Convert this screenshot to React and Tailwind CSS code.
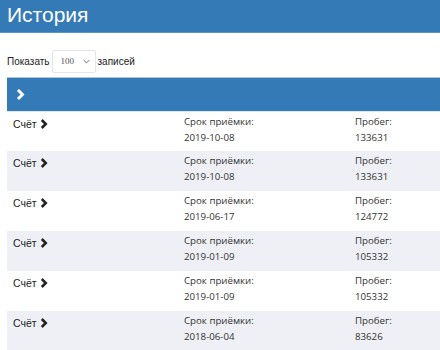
import React from "react";

const rows = [
  ["2019-10-08", "133631"],
  ["2019-10-08", "133631"],
  ["2019-06-17", "124772"],
  ["2019-01-09", "105332"],
  ["2019-01-09", "105332"],
  ["2018-06-04", "83626"],
];

function Chev({ className }) {
  return (
    <svg viewBox="0 0 10 12" className={className} fill="none" stroke="currentColor" strokeWidth="3.2" strokeLinejoin="miter" strokeLinecap="butt">
      <path d="M2.2 1 L7.2 6 L2.2 11" />
    </svg>
  );
}

export default function App() {
  return (
    <div className="w-[440px] h-[350px] overflow-hidden bg-white" style={{ fontFamily: '"Liberation Sans", Arial, sans-serif' }}>
      <div className="h-[33px] bg-[#337ab7] flex items-center pl-[7px] border-b border-[#5b95c8]">
        <h1 className="text-white text-[21px] leading-none -mt-[3px]">История</h1>
      </div>
      <div className="pl-[7px] pt-[17px] flex items-center gap-[2px] text-[10px] text-[#222]">
        <span>Показать</span>
        <div className="w-[44px] h-[23px] border border-[#e5e5e5] rounded-[2px] flex items-center justify-between pl-[8px] pr-[5px]">
          <span className="text-[9px] text-[#555]" style={{ fontFamily: '"Liberation Serif", serif' }}>100</span>
          <svg viewBox="0 0 10 6" className="w-[7px] h-[5px] text-[#666]" fill="none" stroke="currentColor" strokeWidth="1.4">
            <path d="M1 1 L5 5 L9 1" />
          </svg>
        </div>
        <span>записей</span>
      </div>
      <div className="ml-[7px] mt-[4px]">
        <div className="h-[34px] bg-[#337ab7] flex items-center pl-[9px] border-t border-[#a9c7e2]">
          <Chev className="w-[9px] h-[11px] text-white" />
        </div>
        {rows.map((r, i) => (
          <div key={i} className={`h-[40px] flex text-[#222] ${i % 2 === 1 ? "bg-[#eef0f5]" : "bg-white"} ${i === 0 ? "border-t border-[#dfe6ee]" : ""}`}>
            <div className="w-[171px] pl-[6px] pt-[5px] flex items-start gap-[3px] text-[10.5px]">
              <span>Счёт</span>
              <Chev className="w-[8px] h-[10px] mt-[2px] text-[#222]" />
            </div>
            <div className="w-[171px] pl-[6px] pt-[2px] leading-[16px] text-[9.7px] text-[#333]" style={{ fontFamily: '"Open Sans", sans-serif' }}>
              <div>Срок приёмки:</div>
              <div>{r[0]}</div>
            </div>
            <div className="pl-[6px] pt-[2px] leading-[16px] text-[9.7px] text-[#333]" style={{ fontFamily: '"Open Sans", sans-serif' }}>
              <div>Пробег:</div>
              <div>{r[1]}</div>
            </div>
          </div>
        ))}
      </div>
    </div>
  );
}
